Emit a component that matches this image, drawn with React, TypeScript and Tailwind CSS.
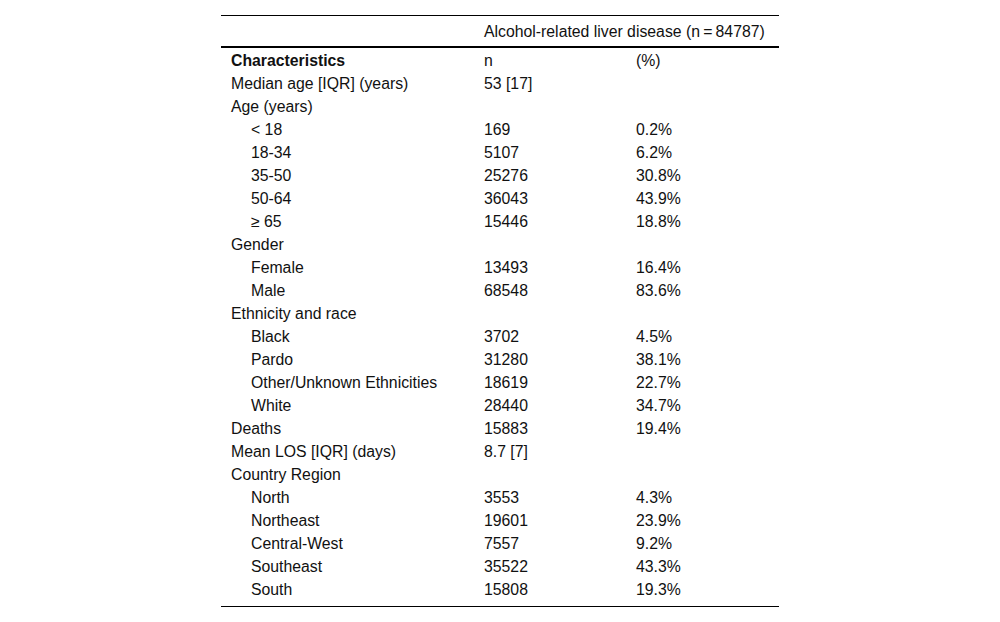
import React from 'react';

type Row = { label: string; n?: string; pct?: string; indent?: boolean; bold?: boolean };

const rows: Row[] = [
  { label: 'Characteristics', n: 'n', pct: '(%)', bold: true },
  { label: 'Median age [IQR] (years)', n: '53 [17]' },
  { label: 'Age (years)' },
  { label: '< 18', n: '169', pct: '0.2%', indent: true },
  { label: '18-34', n: '5107', pct: '6.2%', indent: true },
  { label: '35-50', n: '25276', pct: '30.8%', indent: true },
  { label: '50-64', n: '36043', pct: '43.9%', indent: true },
  { label: '≥ 65', n: '15446', pct: '18.8%', indent: true },
  { label: 'Gender' },
  { label: 'Female', n: '13493', pct: '16.4%', indent: true },
  { label: 'Male', n: '68548', pct: '83.6%', indent: true },
  { label: 'Ethnicity and race' },
  { label: 'Black', n: '3702', pct: '4.5%', indent: true },
  { label: 'Pardo', n: '31280', pct: '38.1%', indent: true },
  { label: 'Other/Unknown Ethnicities', n: '18619', pct: '22.7%', indent: true },
  { label: 'White', n: '28440', pct: '34.7%', indent: true },
  { label: 'Deaths', n: '15883', pct: '19.4%' },
  { label: 'Mean LOS [IQR] (days)', n: '8.7 [7]' },
  { label: 'Country Region' },
  { label: 'North', n: '3553', pct: '4.3%', indent: true },
  { label: 'Northeast', n: '19601', pct: '23.9%', indent: true },
  { label: 'Central-West', n: '7557', pct: '9.2%', indent: true },
  { label: 'Southeast', n: '35522', pct: '43.3%', indent: true },
  { label: 'South', n: '15808', pct: '19.3%', indent: true },
];

export default function App() {
  return (
    <div className="min-h-[622px] bg-white pt-[15px] font-['Liberation_Sans',Arial,sans-serif] text-[15.8px] text-[#111]">
      <div className="mx-auto w-[558px] border-y border-black">
        <div className="grid h-[32px] grid-cols-[263px_1fr] items-center border-b-2 border-black">
          <div />
          <div className="pt-[1px]">Alcohol-related liver disease (n{'\u2009'}={'\u2009'}84787)</div>
        </div>
        <div className="pt-[1px] pb-[5px]">
          {rows.map((r) => (
            <div key={r.label} className="grid h-[23px] grid-cols-[263px_152px_1fr] items-center leading-[23px]">
              <div className={`${r.indent ? 'pl-[30px]' : 'pl-[10px]'} ${r.bold ? 'font-bold' : ''}`}>{r.label}</div>
              <div>{r.n}</div>
              <div>{r.pct}</div>
            </div>
          ))}
        </div>
      </div>
    </div>
  );
}
